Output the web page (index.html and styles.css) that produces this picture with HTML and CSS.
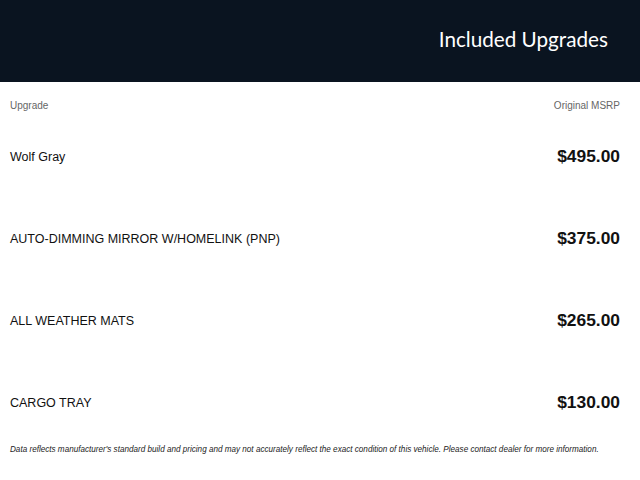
FILE: index.html
```html
<!DOCTYPE html>
<html>
<head>
<meta charset="utf-8">
<link rel="stylesheet" href="styles.css">
</head>
<body>
<header class="banner">
  <h1 class="banner-title">Included Upgrades</h1>
</header>
<main class="list">
  <div class="list-head">
    <span>Upgrade</span>
    <span>Original MSRP</span>
  </div>
  <div class="item"><span class="item-name">Wolf Gray</span><span class="item-price">$495.00</span></div>
  <div class="item"><span class="item-name">AUTO-DIMMING MIRROR W/HOMELINK (PNP)</span><span class="item-price">$375.00</span></div>
  <div class="item"><span class="item-name">ALL WEATHER MATS</span><span class="item-price">$265.00</span></div>
  <div class="item"><span class="item-name">CARGO TRAY</span><span class="item-price">$130.00</span></div>
  <p class="note">Data reflects manufacturer's standard build and pricing and may not accurately reflect the exact condition of this vehicle. Please contact dealer for more information.</p>
</main>
</body>
</html>
```

FILE: styles.css
```css
* { box-sizing: border-box; }
html, body { margin: 0; padding: 0; background: #fff; }
body { font-family: "Liberation Sans", Arial, sans-serif; color: #111; }

.banner {
  height: 82px;
  background: #0a1420;
  display: flex;
  align-items: center;
  justify-content: flex-end;
  padding: 0 32px 4px 0;
}
.banner-title {
  margin: 0;
  font-family: Lato, sans-serif;
  font-weight: 400;
  font-size: 20.7px;
  color: #fff;
  line-height: 1;
}

.list { padding: 0 20px 0 10px; }

.list-head {
  display: flex;
  justify-content: space-between;
  font-size: 10px;
  line-height: 12px;
  color: #666;
  padding-top: 18px;
  height: 33px;
}

.item {
  display: flex;
  justify-content: space-between;
  align-items: center;
  height: 82px;
}
.item-name { font-size: 12.5px; color: #111; padding-top: 2px; }
.item-price { font-size: 17.4px; font-weight: 700; color: #111; }

.note {
  margin: 2px 0 0;
  font-size: 8.15px;
  line-height: 10px;
  font-style: italic;
  color: #222;
}
```
